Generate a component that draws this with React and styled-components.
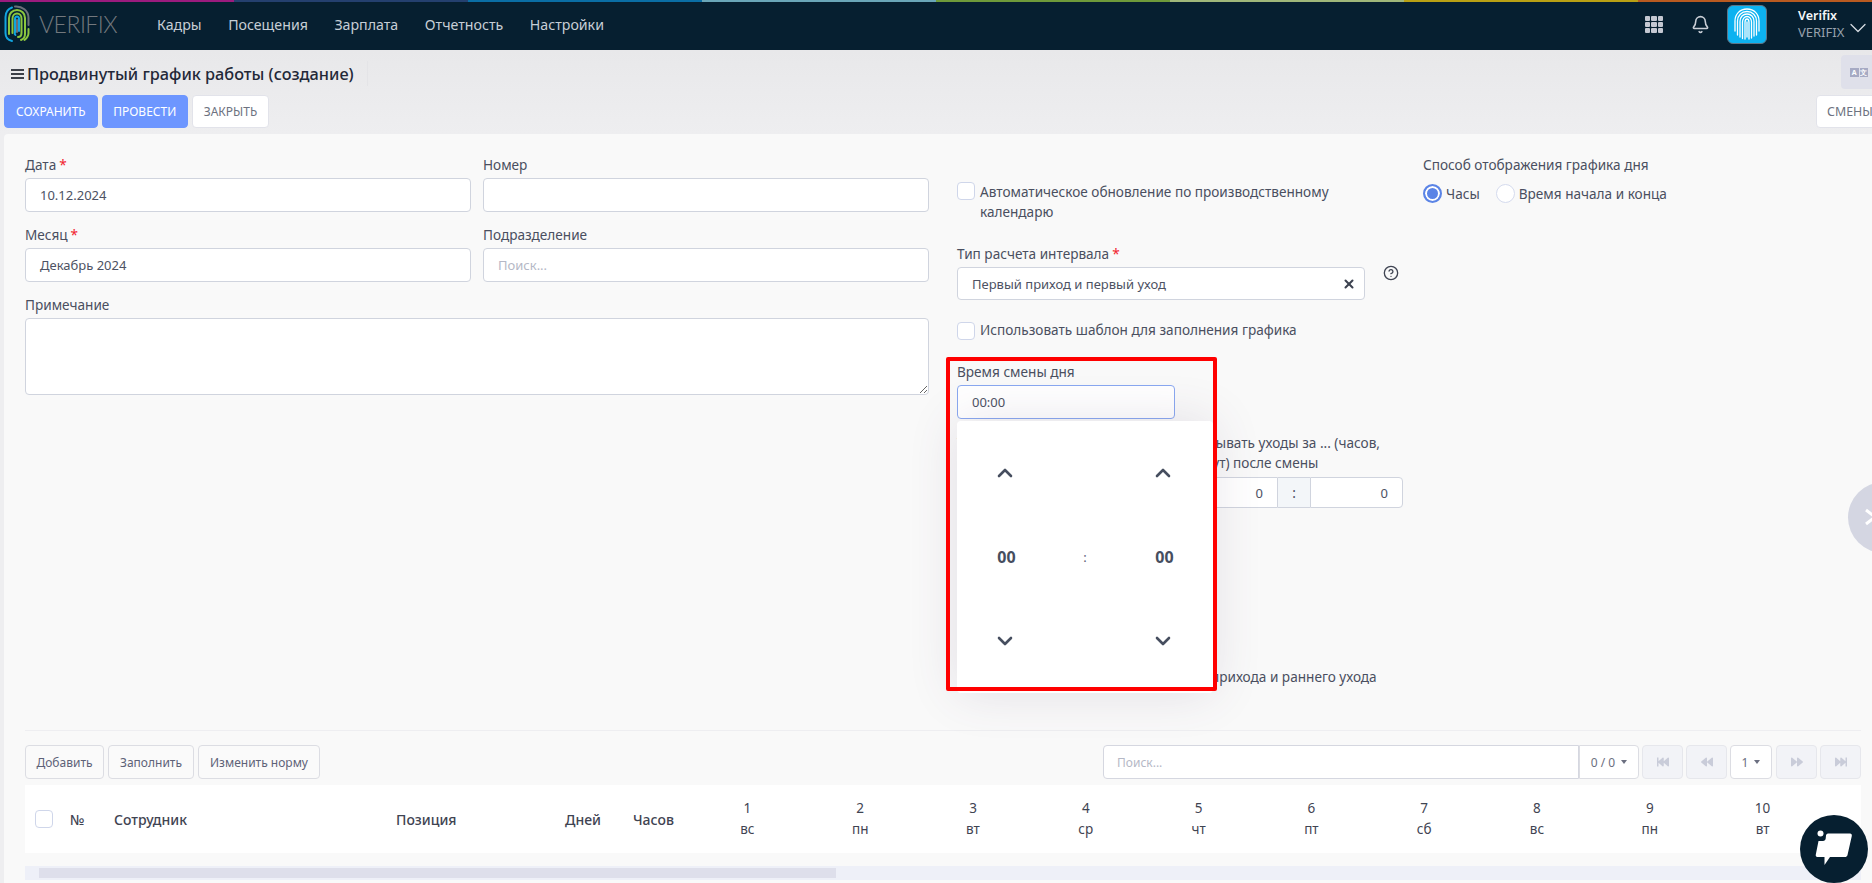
import React from "react";
import styled, {createGlobalStyle} from "styled-components";
import {Bell, ChevronDown, ChevronUp, CircleHelp, X} from "lucide-react";
import {FaBackward, FaFastBackward, FaFastForward, FaForward} from "react-icons/fa";

const GlobalStyle = createGlobalStyle`
  html, body {
    margin: 0;
    padding: 0;
    height: 100%;
    overflow: hidden;
    background: #ececee;
    font-family: "Noto Sans", "Open Sans", sans-serif;
    font-size: 13.6px;
    color: #4a4f60;
  }
  * { box-sizing: border-box; }
`;

const Page = styled.div`
  position: relative;
  width: 1872px;
  height: 883px;
  overflow: hidden;
  display: flex;
  flex-direction: column;
  background: linear-gradient(180deg, #e8e8ea 50px, #eeeef0 134px);
`;

const Header = styled.header`
  position: relative;
  flex: 0 0 50px;
  display: flex;
  align-items: center;
  background: #061f30;
  padding: 0 0 2px 4px;
`;

const Rainbow = styled.div`
  position: absolute;
  top: 0;
  left: 0;
  right: 0;
  height: 2px;
  display: grid;
  grid-template-columns: repeat(8, 1fr);
`;

const Stripe = styled.span`
  background: ${p => p.$color};
`;

const Brand = styled.div`
  display: flex;
  align-items: center;
  gap: 9px;
  width: 153px;
  font-family: "Lato", sans-serif;
  font-weight: 300;
  font-size: 23px;
  letter-spacing: -0.5px;
  color: #73787d;
`;

const Nav = styled.nav`
  display: flex;
  gap: 26.5px;
  font-size: 14.2px;
  color: #c6ced6;
`;

const HeaderRight = styled.div`
  margin-left: auto;
  display: flex;
  align-items: center;
  color: #c9ced6;
`;

const GridIcon = styled.div`
  display: grid;
  grid-template-columns: repeat(3, 5.5px);
  grid-auto-rows: 5px;
  gap: 1px;
  margin-right: 28px;
  span { background: #c4c8d2; border-radius: 1px; }
`;

const Avatar = styled.div`
  width: 40px;
  height: 39px;
  margin: 0 31px 0 17px;
  display: flex;
  align-items: center;
  justify-content: center;
  background: #0db2f0;
  border: 1px solid #5f7485;
  border-radius: 6px;
`;

const UserBlock = styled.div`
  display: flex;
  flex-direction: column;
  width: 46px;
  line-height: 17px;
  font-size: 12.5px;
`;

const UserName = styled.span`
  color: #f4f6f8;
  font-weight: 600;
`;

const UserOrg = styled.span`
  color: #97a1ac;
  font-size: 13px;
`;

const UserChevron = styled(ChevronDown)`
  margin-top: 8px;
  color: #d7dce2;
`;

const TitleRow = styled.div`
  flex: 0 0 45px;
  display: flex;
  align-items: center;
  padding: 2px 0 0 11px;
`;

const Title = styled.h1`
  margin: 0;
  padding: 0 13px 0 0;
  height: 25px;
  display: flex;
  align-items: center;
  gap: 3px;
  font-size: 16.3px;
  font-weight: 500;
  color: #232838;
  border-right: 1px solid #e4e4e7;
`;

const Burger = styled.span`
  width: 13px;
  height: 10px;
  border-top: 2px solid #3c4048;
  border-bottom: 2px solid #3c4048;
  position: relative;
  &::after {
    content: "";
    position: absolute;
    left: 0;
    right: 0;
    top: 2px;
    height: 2px;
    background: #3c4048;
  }
`;

const Toolbar = styled.div`
  flex: 0 0 39px;
  display: flex;
  align-items: flex-start;
  gap: 4px;
  padding-left: 4px;
`;

const ToolButton = styled.button`
  height: 33px;
  padding: 0 ${p => p.$pad || 11}px;
  border-radius: 4px;
  font: inherit;
  font-size: 12px;
  text-transform: uppercase;
  border: 1px solid ${p => (p.$primary ? "#6d96ff" : "#e2e3ea")};
  background: ${p => (p.$primary ? "#6d96ff" : "#fff")};
  color: ${p => (p.$primary ? "#fff" : "#6d7280")};
`;

const ShiftsButton = styled(ToolButton)`
  margin-left: auto;
  margin-right: -12px;
  width: 68px;
  font-size: 12.4px;
  padding: 0 0 0 10px;
  text-align: left;
`;

const TranslateButton = styled.div`
  position: absolute;
  top: 55px;
  left: 1841px;
  width: 40px;
  height: 34px;
  display: flex;
  align-items: center;
  gap: 1px;
  padding-left: 9px;
  background: #dfe0ea;
  border-radius: 4px 0 0 4px;
`;

const TranslateChip = styled.span`
  width: 8.5px;
  height: 9px;
  display: flex;
  align-items: center;
  justify-content: center;
  background: #a6aac4;
  color: #fff;
  font-size: 7px;
  font-weight: 700;
  line-height: 1;
`;

const Panel = styled.main`
  flex: 1;
  margin-left: 4px;
  display: flex;
  flex-direction: column;
  background: #f9f9f9;
  border-radius: 4px 0 0 0;
  padding: 0 11px 0 21px;
`;

const FormGrid = styled.div`
  flex: 0 0 596px;
  display: grid;
  grid-template-columns: 932px 466px 1fr;
  padding-top: 21px;
`;

const LeftForm = styled.section`
  display: grid;
  grid-template-columns: 1fr 1fr;
  column-gap: 12px;
  row-gap: 13px;
  align-content: start;
  padding-right: 28px;
`;

const Field = styled.div`
  position: relative;
  grid-column: ${p => (p.$wide ? "1 / -1" : "auto")};
`;

const Label = styled.label`
  display: block;
  height: 20px;
  line-height: 20px;
  margin-bottom: 3px;
`;

const Required = styled.span`
  color: #f1222e;
  margin-left: 3px;
`;

const Control = styled.div`
  height: ${p => p.$height || 34}px;
  display: flex;
  align-items: center;
  padding: 0 14px;
  font-size: 13px;
  color: ${p => (p.$placeholder ? "#b5b8c6" : "#4d5263")};
  background: #fff;
  border: 1px solid ${p => (p.$focused ? "#8aa8f0" : "#d0d4de")};
  border-radius: 4px;
`;

const TextArea = styled.textarea`
  display: block;
  width: 100%;
  height: 77px;
  background: #fff;
  border: 1px solid #d0d4de;
  border-radius: 4px;
  resize: vertical;
`;

const MiddleForm = styled.section`
  padding: 27px 20px 0 0;
`;

const CheckRow = styled.label`
  display: flex;
  align-items: flex-start;
  gap: 5px;
  max-width: 408px;
  line-height: 20px;
  margin-top: ${p => p.$top || 0}px;
`;

const Box = styled.span`
  flex: 0 0 18px;
  width: 18px;
  height: 18px;
  margin-top: ${p => p.$top ?? 0}px;
  background: #fff;
  border: 1px solid #cfd6ea;
  border-radius: 4px;
`;

const TypeField = styled(Field)`
  margin-top: 22px;
  width: 408px;
`;

const SelectClear = styled(X)`
  margin-left: auto;
  margin-right: -6px;
  color: #3d4250;
`;

const HelpIcon = styled(CircleHelp)`
  position: absolute;
  left: 426px;
  top: 21px;
  color: #3f4452;
`;

const TimeField = styled(Field)`
  margin-top: 22px;
  width: 218px;
`;

const Picker = styled.div`
  position: absolute;
  z-index: 5;
  left: 0;
  top: 59px;
  width: 256px;
  height: 272px;
  padding: 10px 0;
  display: grid;
  grid-template-columns: 96px 64px 92px;
  grid-auto-rows: 84px;
  justify-items: center;
  align-items: center;
  background: #fff;
  border-radius: 4px;
  box-shadow: 0 0 50px rgba(82, 63, 105, 0.14);
`;

const PickerValue = styled.span`
  font-size: 16px;
  font-weight: 700;
  color: #464e5f;
  margin-left: 3px;
`;

const PickerColon = styled.span`
  font-size: 13px;
  color: #5e6278;
`;

const PickerArrow = styled.span`
  display: flex;
  color: #464e5f;
`;

const RedFrame = styled.div`
  position: absolute;
  z-index: 6;
  left: -11px;
  top: -5px;
  width: 271px;
  height: 334px;
  border: 4px solid #ff0000;
  border-radius: 2px;
  pointer-events: none;
`;

const LimitsRow = styled.div`
  display: grid;
  grid-template-columns: 218px 218px;
  column-gap: 10px;
  margin-top: 14px;
`;

const LimitText = styled.div`
  line-height: 20px;
  height: 40px;
  margin-bottom: 4px;
`;

const Pair = styled.div`
  display: grid;
  grid-template-columns: 93px 32px 93px;
  height: 31px;
`;

const PairInput = styled.div`
  display: flex;
  align-items: center;
  justify-content: flex-end;
  padding-right: 14px;
  font-size: 13px;
  color: #4d5263;
  background: #fff;
  border: 1px solid #d0d4de;
  border-radius: ${p => (p.$side === "left" ? "4px 0 0 4px" : "0 4px 4px 0")};
`;

const PairColon = styled.div`
  display: flex;
  align-items: center;
  justify-content: center;
  background: #f3f6f9;
  border-top: 1px solid #d0d4de;
  border-bottom: 1px solid #d0d4de;
`;

const PenaltyRow = styled(CheckRow)`
  margin-top: 159px;
  max-width: none;
`;

const RightForm = styled.section``;

const RadioRow = styled.div`
  display: flex;
  align-items: center;
  height: 20px;
  margin-top: 8px;
`;

const Radio = styled.span`
  width: 19px;
  height: 19px;
  margin-right: 4px;
  border-radius: 50%;
  background: ${p => (p.$on ? "#5b84e6" : "#fff")};
  border: ${p => (p.$on ? "2px solid #5b84e6" : "1px solid #d5dbee")};
  box-shadow: ${p => (p.$on ? "inset 0 0 0 2px #fff" : "none")};
`;

const RadioText = styled.span`
  margin-right: 16px;
`;

const Divider = styled.hr`
  width: 100%;
  margin: 0;
  border: 0;
  border-top: 1px solid #eeeef1;
`;

const GridBar = styled.div`
  display: flex;
  margin-top: 14px;
  height: 34px;
  gap: 4px;
`;

const SmallButton = styled.button`
  height: 34px;
  width: ${p => p.$width}px;
  padding: 0;
  font: inherit;
  font-size: 12px;
  color: #5e6278;
  background: #fafafa;
  border: 1px solid #dcdde3;
  border-radius: 4px;
`;

const SearchGroup = styled.div`
  margin-left: auto;
  display: flex;
  align-items: stretch;
`;

const SearchInput = styled.div`
  width: 476px;
  display: flex;
  align-items: center;
  padding-left: 13px;
  font-size: 12px;
  color: #b5b8c6;
  background: #fff;
  border: 1px solid #d5d7e0;
  border-radius: 4px 0 0 4px;
`;

const CountBox = styled.div`
  width: ${p => p.$width}px;
  margin-right: ${p => p.$gap || 0}px;
  display: flex;
  align-items: center;
  justify-content: center;
  gap: 6px;
  font-size: 12px;
  color: #6b6f80;
  background: #fff;
  border: 1px solid #dcdde3;
  border-radius: ${p => p.$radius || "4px"};
`;

const Caret = styled.span`
  width: 0;
  height: 0;
  border-left: 3px solid transparent;
  border-right: 3px solid transparent;
  border-top: 4px solid #6b6f80;
`;

const PageButton = styled.div`
  width: 41px;
  margin-right: ${p => p.$gap}px;
  display: flex;
  align-items: center;
  justify-content: center;
  font-size: 12px;
  color: #c9ccd9;
  background: #f2f3f7;
  border: 1px solid #e6e7ec;
  border-radius: 4px;
`;

const TableHead = styled.div`
  margin-top: 6px;
  height: 68px;
  display: grid;
  grid-template-columns: 45px 44px 282px 169px 68px 58px repeat(10, 112.8px);
  align-items: center;
  overflow: hidden;
  background: #fff;
  font-weight: 500;
  font-size: 14px;
  color: #3f4452;
`;

const HeadCheck = styled.div`
  padding-left: 10px;
  display: flex;
`;

const DayCell = styled.div`
  display: flex;
  flex-direction: column;
  align-items: center;
  gap: 2px;
  line-height: 19px;
  font-weight: 400;
  font-size: 13.5px;
`;

const HScroll = styled.div`
  margin-top: 13px;
  height: 14px;
  padding: 2px 0 2px 14px;
  background: #eef0f8;
`;

const HThumb = styled.div`
  width: 797px;
  height: 10px;
  background: #dedfeb;
`;

const SideToggle = styled.div`
  position: absolute;
  z-index: 2;
  left: 1848px;
  top: 482px;
  width: 71px;
  height: 71px;
  padding: 25px 0 0 15px;
  border-radius: 50%;
  background: #d4d6e2;
  color: #fff;
`;

const ChatBubble = styled.div`
  position: absolute;
  z-index: 7;
  left: 1800px;
  top: 815px;
  width: 68px;
  height: 68px;
  display: flex;
  align-items: center;
  justify-content: center;
  border-radius: 50%;
  background: #061f30;
`;

const stripes = ["#9b1b7e", "#24406f", "#0a6ea5", "#6aa6b8", "#6e9a3a", "#9fb77a", "#b8a014", "#b85a20"];
const navItems = ["Кадры", "Посещения", "Зарплата", "Отчетность", "Настройки"];
const days = [["1", "вс"], ["2", "пн"], ["3", "вт"], ["4", "ср"], ["5", "чт"], ["6", "пт"], ["7", "сб"], ["8", "вс"], ["9", "пн"], ["10", "вт"]];

function Logo() {
  return (
    <svg width="26" height="38" viewBox="0 0 26 38" fill="none" strokeWidth="2" strokeLinecap="round">
      <path d="M8 36C4 35 1.500 32 1.500 28V12C1.500 7.500 4 4 8 2.500" stroke="#12a5e0"/>
      <path d="M11 1.500C18 1 24.500 5.500 24.500 13V20" stroke="#6b7078"/>
      <path d="M5 29V13C5 8.500 8.500 5 13 5S21 8.500 21 13V29C21 32 19.500 34 17 35" stroke="#8cc63f"/>
      <path d="M8.500 28V13.500C8.500 10.500 10.500 8.500 13 8.500S17.500 10.500 17.500 13.500V28C17.500 30.500 16 32 14 32" stroke="#8cc63f"/>
      <path d="M11.500 30C10 29 11 28 11 27V14C11 12.500 12 11.500 13 11.500S15 12.500 15 14V26" stroke="#12a5e0"/>
      <path d="M13 15V27" stroke="#6b7078"/>
      <path d="M24.500 24V28C24.500 31 23 33 20.500 35" stroke="#8cc63f"/>
    </svg>
  );
}

function Fingerprint() {
  return (
    <svg width="32" height="34" viewBox="0 0 32 34" fill="none" stroke="#fff" strokeWidth="1.300" strokeLinecap="round">
      <path d="M4 24V14C4 7 9 2 16 2S28 7 28 14V24"/>
      <path d="M6.500 28V14C6.500 8.500 10.500 4.500 16 4.500S25.500 8.500 25.500 14V28"/>
      <path d="M9 30V14.500C9 10 12 7 16 7S23 10 23 14.500V29"/>
      <path d="M11.500 31.500V15C11.500 12 13.500 9.500 16 9.500S20.500 12 20.500 15V31"/>
      <path d="M14 32V15.500C14 13.500 15 12 16 12S18 13.500 18 15.500V32"/>
      <path d="M16 15V30"/>
    </svg>
  );
}

function ChatIcon() {
  return (
    <svg width="40" height="38" viewBox="0 0 40 38" fill="#fff">
      <circle cx="6.500" cy="3.500" r="3"/>
      <path d="M12 5.500C12 4.500 13 3.500 14 3.500H36C37.500 3.500 38 4.500 37.800 6L33.500 25C33.200 26.500 32 27 31 27H16L10.500 35V27H3.500C2 27 1.500 26 1.800 24.500L4.500 11H9C10.500 11 11.500 10 11.700 8.500Z"/>
    </svg>
  );
}

function ChevronRightMark() {
  return (
    <svg width="16" height="20" viewBox="0 0 16 20" fill="none" stroke="#fff" strokeWidth="3">
      <path d="M3 3L12 10L3 17"/>
    </svg>
  );
}

function Picked() {
  return (
    <Picker>
      <PickerArrow><ChevronUp size={24} strokeWidth={2.6}/></PickerArrow>
      <span/>
      <PickerArrow><ChevronUp size={24} strokeWidth={2.6}/></PickerArrow>
      <PickerValue>00</PickerValue>
      <PickerColon>:</PickerColon>
      <PickerValue>00</PickerValue>
      <PickerArrow><ChevronDown size={24} strokeWidth={2.6}/></PickerArrow>
      <span/>
      <PickerArrow><ChevronDown size={24} strokeWidth={2.6}/></PickerArrow>
    </Picker>
  );
}

function LimitColumn({text}) {
  return (
    <div>
      <LimitText>{text}</LimitText>
      <Pair>
        <PairInput $side="left">0</PairInput>
        <PairColon>:</PairColon>
        <PairInput $side="right">0</PairInput>
      </Pair>
    </div>
  );
}

export default function App() {
  return (
    <>
      <GlobalStyle/>
      <Page>
        <Header>
          <Rainbow>
            {stripes.map(color => <Stripe key={color} $color={color}/>)}
          </Rainbow>
          <Brand><Logo/>VERIFIX</Brand>
          <Nav>
            {navItems.map(item => <span key={item}>{item}</span>)}
          </Nav>
          <HeaderRight>
            <GridIcon>
              {Array.from({length: 9}, (_, i) => <span key={i}/>)}
            </GridIcon>
            <Bell size={19} strokeWidth={2}/>
            <Avatar><Fingerprint/></Avatar>
            <UserBlock>
              <UserName>Verifix</UserName>
              <UserOrg>VERIFIX</UserOrg>
            </UserBlock>
            <UserChevron size={28} strokeWidth={1.1}/>
          </HeaderRight>
        </Header>

        <TitleRow>
          <Title><Burger/>Продвинутый график работы (создание)</Title>
        </TitleRow>
        <TranslateButton>
          <TranslateChip>A</TranslateChip>
          <TranslateChip>文</TranslateChip>
        </TranslateButton>

        <Toolbar>
          <ToolButton $primary>Сохранить</ToolButton>
          <ToolButton $primary $pad={10.5}>Провести</ToolButton>
          <ToolButton>Закрыть</ToolButton>
          <ShiftsButton>Смены</ShiftsButton>
        </Toolbar>

        <Panel>
          <FormGrid>
            <LeftForm>
              <Field>
                <Label>Дата<Required>*</Required></Label>
                <Control>10.12.2024</Control>
              </Field>
              <Field>
                <Label>Номер</Label>
                <Control/>
              </Field>
              <Field>
                <Label>Месяц<Required>*</Required></Label>
                <Control>Декабрь 2024</Control>
              </Field>
              <Field>
                <Label>Подразделение</Label>
                <Control $placeholder>Поиск...</Control>
              </Field>
              <Field $wide>
                <Label>Примечание</Label>
                <TextArea/>
              </Field>
            </LeftForm>

            <MiddleForm>
              <CheckRow>
                <Box/>
                <span>Автоматическое обновление по производственному календарю</span>
              </CheckRow>
              <TypeField>
                <Label>Тип расчета интервала<Required>*</Required></Label>
                <Control $height={33}>
                  Первый приход и первый уход
                  <SelectClear size={14} strokeWidth={3.5}/>
                </Control>
                <HelpIcon size={16} strokeWidth={2}/>
              </TypeField>
              <CheckRow $top={20}>
                <Box $top={2}/>
                <span>Использовать шаблон для заполнения графика</span>
              </CheckRow>
              <TimeField>
                <Label>Время смены дня</Label>
                <Control $focused>00:00</Control>
                <Picked/>
                <RedFrame/>
              </TimeField>
              <LimitsRow>
                <LimitColumn text="Учитывать приходы за ... (часов, минут) до смены"/>
                <LimitColumn text="Учитывать уходы за ... (часов, минут) после смены"/>
              </LimitsRow>
              <PenaltyRow>
                <Box $top={1}/>
                <span>Использовать учет норм позднего прихода и раннего ухода</span>
              </PenaltyRow>
            </MiddleForm>

            <RightForm>
              <Label>Способ отображения графика дня</Label>
              <RadioRow>
                <Radio $on/>
                <RadioText>Часы</RadioText>
                <Radio/>
                <span>Время начала и конца</span>
              </RadioRow>
            </RightForm>
          </FormGrid>

          <Divider/>

          <GridBar>
            <SmallButton $width={79}>Добавить</SmallButton>
            <SmallButton $width={86}>Заполнить</SmallButton>
            <SmallButton $width={122}>Изменить норму</SmallButton>
            <SearchGroup>
              <SearchInput>Поиск...</SearchInput>
              <CountBox $width={60} $gap={3} $radius="0 4px 4px 0">0 / 0 <Caret/></CountBox>
              <PageButton $gap={3}><FaFastBackward size={12}/></PageButton>
              <PageButton $gap={3}><FaBackward size={12}/></PageButton>
              <CountBox $width={42} $gap={4}>1 <Caret/></CountBox>
              <PageButton $gap={3}><FaForward size={12}/></PageButton>
              <PageButton $gap={0}><FaFastForward size={12}/></PageButton>
            </SearchGroup>
          </GridBar>

          <TableHead>
            <HeadCheck><Box/></HeadCheck>
            <span>№</span>
            <span>Сотрудник</span>
            <span>Позиция</span>
            <span>Дней</span>
            <span>Часов</span>
            {days.map(([num, name]) => (
              <DayCell key={num}>
                <span>{num}</span>
                <span>{name}</span>
              </DayCell>
            ))}
          </TableHead>

          <HScroll><HThumb/></HScroll>
        </Panel>

        <SideToggle><ChevronRightMark/></SideToggle>
        <ChatBubble><ChatIcon/></ChatBubble>
      </Page>
    </>
  );
}
